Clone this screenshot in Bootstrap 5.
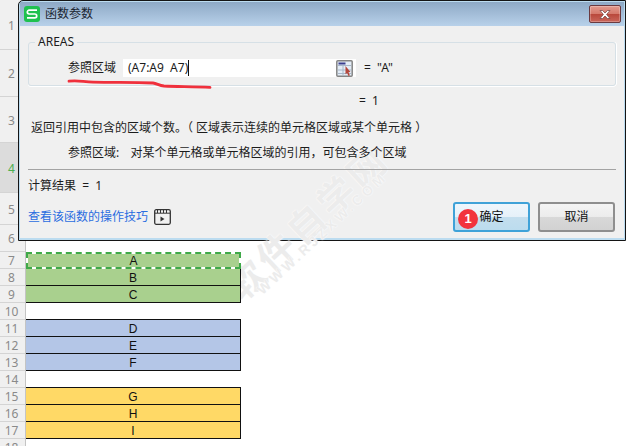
<!DOCTYPE html>
<html lang="zh">
<head>
<meta charset="utf-8">
<title>函数参数</title>
<link href="https://cdn.jsdelivr.net/npm/bootstrap@5.3.0/dist/css/bootstrap.min.css" rel="stylesheet">
<style>
html,body{margin:0;height:446px;overflow:hidden;background:#fff}
body{font:12px/16px "Noto Sans","Noto Sans CJK SC",sans-serif;color:#1c1c1c;position:relative}
.sheet{height:446px}
.heads{width:26px;background:#f0f0f0;border-right:1px solid #c4c4c4;flex:none}
.hd{display:flex;align-items:center;justify-content:center;color:#8a8a8a;border-bottom:1px solid #d4d4d4;padding:2px 2px 0 0;font-size:12px;height:17px}
.hd.h50{height:50px}.hd.h47{height:47px}.hd.h46{height:46px}.hd.h32{height:32px}.hd.h27{height:27px}
.hd.sel{background:#dcdcdc;color:#4caf50}
.cells{width:215px;flex:none;margin-top:252px;position:relative;z-index:2}
.rowc{height:17px;display:flex;align-items:center;justify-content:center;color:#111;border:solid #111;border-width:0 1px 1px 0;padding-top:2px;font:12px/15px "Liberation Sans",sans-serif;position:relative}
.first{border-top-width:1px;height:18px;margin-top:-1px}
.fgreen{background:#a9d08e}.fblue{background:#b4c6e7}.fgold{background:#ffd966}
.blank{height:17px}
.cutcell{border:0;border-bottom:1px solid #111;background:#a9d08e}
.cutcell::after{content:"";position:absolute;inset:0;margin-bottom:-1px;border:2px solid #fff;outline:0}
.cutcell::before{content:"";position:absolute;inset:0;margin-bottom:-1px;border:2px dashed #3fa948;z-index:1}
.dlg{position:absolute;left:18px;top:0;width:608px;height:241px;border:1px solid #141414;border-top-left-radius:5px;background:#bcdcf0;padding:1px 1px 2px 1px}
.ttl{height:24px;background:linear-gradient(#8ea9c6,#b8d1ea);padding-left:4px;gap:5px;margin-top:0}
.lg{width:16px;height:16px;flex:none;display:block}
.ttl-t{color:#1a2430}
.closeb{width:32px;height:18px;margin-right:3px;border:1px solid #6a3a40;border-radius:2px;background:linear-gradient(#e29a8e 0,#d57a6c 48%,#b9493c 52%,#c9655a 100%);box-shadow:inset 0 0 0 1px rgba(255,255,255,.25);padding:0}
.dbody{background:#f0f0f0;height:212px;padding:8px 8px 0 8px}
.dbody>*{position:relative;z-index:2}
fieldset.grp{border:1px solid #d6e0e6;border-radius:3px;box-shadow:0 1px 0 #fff,1px 0 0 #fff;padding:0 0 7px 0;margin:0;width:588px;height:52px}
legend.grp-l{float:none;width:auto;font-size:12px;line-height:16px;padding:0 3px;margin:0 0 0 6px}
.frow{margin-top:9px;height:18px;margin-left:39px}
.lab{width:55px;flex:none}
.inp{width:233px;height:18px;background:#fff;padding-left:5px;line-height:18px;position:relative;flex:none}
.caret{position:absolute;left:65px;top:1px;width:1px;height:16px;background:#111}
.pick{position:absolute;right:3px;top:1px;width:17px;height:17px}
.eqv{margin-left:8px}
.eq1{margin:7px 0 0 331px;height:16px}
.desc{margin:11px 0 0 3px;height:16px}
.parm{margin:9px 0 0 40px;height:16px}
.gapx{display:inline-block;width:5px}
.rule{height:1px;background:#a3a3a3;margin-top:8px;width:588px}
.resl{margin-top:8px;height:16px}
.foot{margin-top:8px;height:30px;width:587px}
.tip{color:#2a6de0;text-decoration:none}
.film{width:17px;height:16px;margin-left:6px;display:block}
.wbtn{width:77px;height:30px;padding:0;border-radius:3px;font-size:12px;line-height:16px;color:#111;position:relative}
.wok{border:2px solid #3fa2d8;background:linear-gradient(#eef6fc 0,#e6f1f9 48%,#c3deee 52%,#bcdcee 100%)}
.wno{border:2px solid #8e8e8e;background:linear-gradient(#f4f4f4 0,#ececec 48%,#d8d8d8 52%,#d2d2d2 100%);margin-left:8px}
.pin{position:absolute;left:3px;top:5px;width:20px;height:20px;border-radius:50%;background:#f2333d;color:#fff;font:700 13px/20px "Liberation Sans",sans-serif;text-align:center}
.stroke{position:absolute;left:0;top:0;width:240px;height:100px;pointer-events:none;z-index:3}
.wm{position:absolute;z-index:1;white-space:nowrap;pointer-events:none;transform:translate(-50%,-50%) rotate(-43deg);color:#ececec;text-shadow:0 0 1px #fff,0 0 2px #fff}
.wm-a{left:306px;top:221px;font:700 37px/40px "Noto Sans CJK SC",sans-serif;letter-spacing:4px}
.wm-b{left:322px;top:233px;font:700 14px/18px "Liberation Sans",sans-serif;letter-spacing:3.4px}
</style>
</head>
<body>
<div class="sheet d-flex">
  <div class="heads">
    <div class="hd h50">1</div><div class="hd h47">2</div><div class="hd h46">3</div>
    <div class="hd h50 sel">4</div><div class="hd h32">5</div><div class="hd h27">6</div>
    <div class="hd">7</div><div class="hd">8</div><div class="hd">9</div><div class="hd">10</div>
    <div class="hd">11</div><div class="hd">12</div><div class="hd">13</div><div class="hd">14</div>
    <div class="hd">15</div><div class="hd">16</div><div class="hd">17</div><div class="hd">18</div>
  </div>
  <div class="cells">
    <div class="rowc cutcell">A</div>
    <div class="rowc fgreen">B</div>
    <div class="rowc fgreen">C</div>
    <div class="blank"></div>
    <div class="rowc first fblue">D</div>
    <div class="rowc fblue">E</div>
    <div class="rowc fblue">F</div>
    <div class="blank"></div>
    <div class="rowc first fgold">G</div>
    <div class="rowc fgold">H</div>
    <div class="rowc fgold">I</div>
  </div>
</div>

<div class="dlg">
  <div class="ttl d-flex align-items-center">
    <svg class="lg" viewBox="0 0 16 16"><rect width="16" height="16" rx="3" fill="#1fc14f"/><path d="M13 4.2H5.2a1.9 1.9 0 0 0 0 3.8h5.6a1.9 1.9 0 0 1 0 3.8H3" fill="none" stroke="#fff" stroke-width="1.7"/></svg>
    <span class="ttl-t">函数参数</span>
    <button type="button" class="closeb ms-auto d-flex align-items-center justify-content-center" aria-label="关闭">
      <svg width="16" height="11" viewBox="0 0 16 11"><path d="M3 1.5h2.6L8 4l2.4-2.5H13L9.6 5.5 13 9.5h-2.6L8 7l-2.4 2.5H3l3.4-4z" fill="#fff" stroke="#7b4b4b" stroke-width=".8"/></svg>
    </button>
  </div>
  <div class="dbody">
    <fieldset class="grp">
      <legend class="grp-l">AREAS</legend>
      <div class="frow d-flex align-items-center">
        <span class="lab">参照区域</span>
        <div class="inp">(A7:A9&nbsp; A7)<i class="caret"></i>
          <svg class="pick" viewBox="0 0 17 17"><rect x=".8" y=".8" width="15.4" height="15.4" rx="1" fill="#e4edf7" stroke="#858585" stroke-width="1.5"/><rect x="2.5" y="2.5" width="7" height="2" fill="#3b3f8f"/><path d="M2 5.5h13M2 10h13M2 13.5h13M7 5.5v10" stroke="#a9b8c9"/><path d="M9.5 6l5 6-2 .3 1.4 2.9-1.4.7-1.4-3-1.6 1.4z" fill="#b5473b"/></svg>
        </div>
        <span class="eqv">=&nbsp; "A"</span>
      </div>
    </fieldset>
    <div class="eq1">=&nbsp; 1</div>
    <div class="desc">返回引用中包含的区域个数。（ 区域表示连续的单元格区域或某个单元格 ）</div>
    <div class="parm">参照区域:<span class="gapx"></span>&nbsp; 对某个单元格或单元格区域的引用，可包含多个区域</div>
    <div class="rule"></div>
    <div class="resl">计算结果&nbsp; =&nbsp; 1</div>
    <div class="foot d-flex align-items-center">
      <a class="tip" href="#">查看该函数的操作技巧</a>
      <svg class="film" viewBox="0 0 17 16"><rect x=".7" y=".7" width="15.6" height="14.6" rx="1.5" fill="none" stroke="#333" stroke-width="1.3"/><path d="M1 4.2h15M3.5 1v3M6.5 1v3M9.5 1v3M12.5 1v3" stroke="#333"/><path d="M6.5 7.5l4 2.5-4 2.5z" fill="#333"/></svg>
      <button type="button" class="btn wbtn wok ms-auto">确定<span class="pin">1</span></button>
      <button type="button" class="btn wbtn wno">取消</button>
    </div>
  </div>
</div>

<svg class="stroke" viewBox="0 0 240 100"><path d="M69 81.2c8-1.4 14 .6 24 .9 20 .5 40 .2 60 .9 4 .4 6 2.6 11 3 14 .7 30 .5 46 1.4" fill="none" stroke="#f0303c" stroke-width="2.8" stroke-linecap="round"/></svg>
<div class="wm wm-a" aria-hidden="true">软件自学网</div>
<div class="wm wm-b" aria-hidden="true">WWW.RJZXW.COM</div>
<script src="https://cdn.jsdelivr.net/npm/bootstrap@5.3.0/dist/js/bootstrap.bundle.min.js"></script>
</body>
</html>
